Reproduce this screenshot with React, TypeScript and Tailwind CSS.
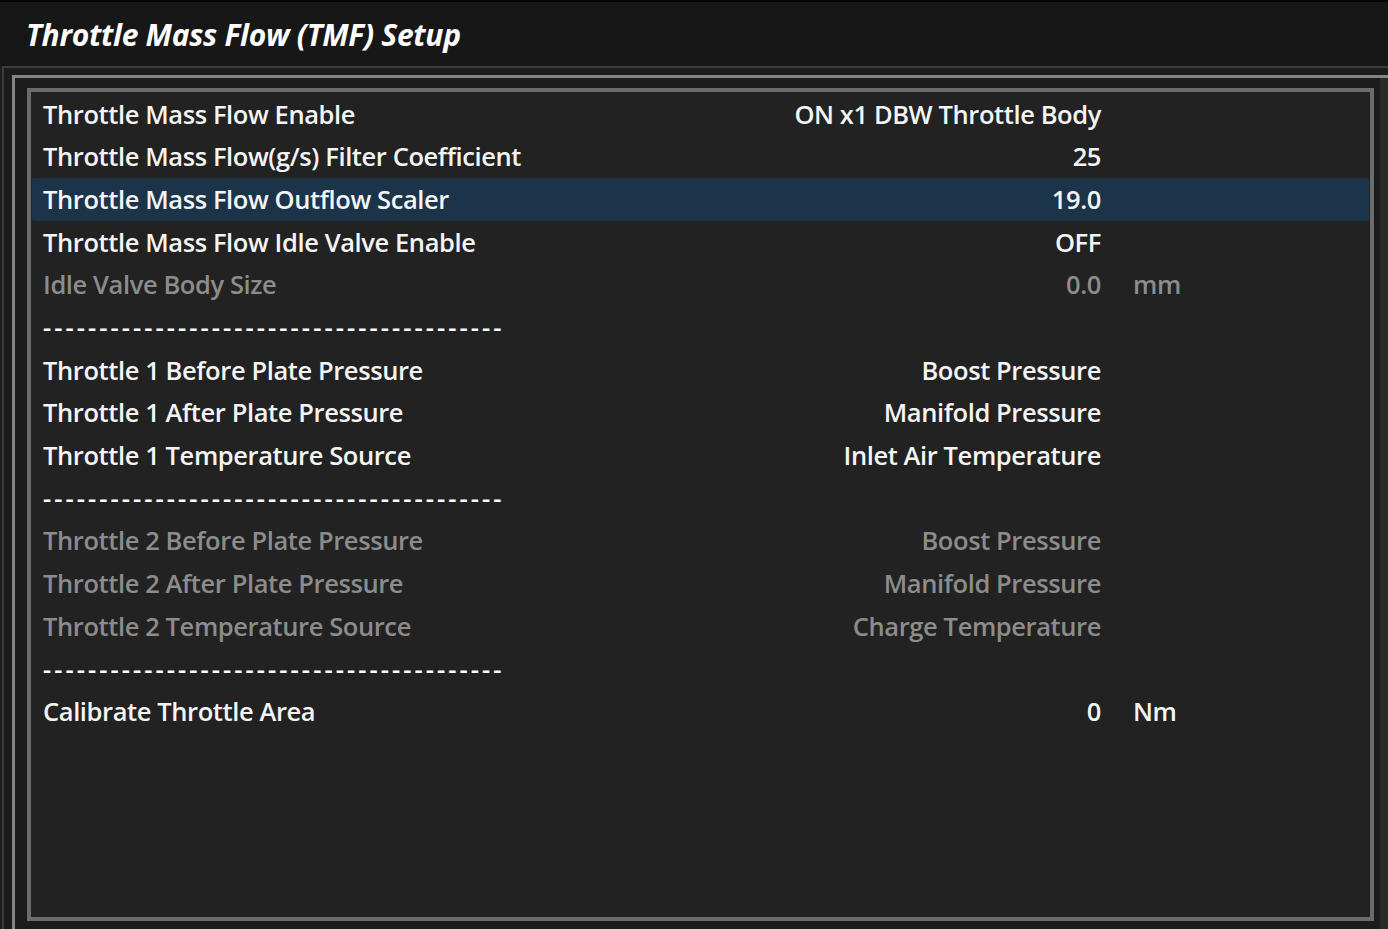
import React from "react";

type Row =
  | { kind: "row"; label: string; value: string; unit?: string; dim?: boolean; selected?: boolean }
  | { kind: "sep" };

const rows: Row[] = [
  { kind: "row", label: "Throttle Mass Flow Enable", value: "ON x1 DBW Throttle Body" },
  { kind: "row", label: "Throttle Mass Flow(g/s) Filter Coefficient", value: "25" },
  { kind: "row", label: "Throttle Mass Flow Outflow Scaler", value: "19.0", selected: true },
  { kind: "row", label: "Throttle Mass Flow Idle Valve Enable", value: "OFF" },
  { kind: "row", label: "Idle Valve Body Size", value: "0.0", unit: "mm", dim: true },
  { kind: "sep" },
  { kind: "row", label: "Throttle 1 Before Plate Pressure", value: "Boost Pressure" },
  { kind: "row", label: "Throttle 1 After Plate Pressure", value: "Manifold Pressure" },
  { kind: "row", label: "Throttle 1 Temperature Source", value: "Inlet Air Temperature" },
  { kind: "sep" },
  { kind: "row", label: "Throttle 2 Before Plate Pressure", value: "Boost Pressure", dim: true },
  { kind: "row", label: "Throttle 2 After Plate Pressure", value: "Manifold Pressure", dim: true },
  { kind: "row", label: "Throttle 2 Temperature Source", value: "Charge Temperature", dim: true },
  { kind: "sep" },
  { kind: "row", label: "Calibrate Throttle Area", value: "0", unit: "Nm" },
];

export default function App() {
  return (
    <div
      className="w-[1388px] h-[929px] overflow-hidden bg-[#1e1e1e] flex flex-col"
      style={{ fontFamily: "'Open Sans', 'Noto Sans', sans-serif" }}
    >
      <div className="h-[66px] shrink-0 border-t-2 border-[#050505] bg-[#171717] flex items-center pl-[26px] pt-[2px]">
        <span className="text-[30px] font-bold italic text-white tracking-[-0.3px] leading-none">
          Throttle Mass Flow (TMF) Setup
        </span>
      </div>
      <div className="flex-1 flex flex-col border-t-2 border-l-2 border-[#3c3c3c] ml-[2px] bg-[#1c1c1c]">
        <div className="flex-1 flex mt-[7px] ml-[8px] border-t-[3px] border-l-[3px] border-[#858585] pt-[10px] pl-[12px]">
          <div className="flex-1 flex flex-col mb-[8px] border-4 border-[#6c6c6c] bg-[#222222] pt-px pl-px pr-[1px]">
            {rows.map((r, i) =>
              r.kind === "sep" ? (
                <div key={i} className="h-[42.7px] flex items-center pl-[11px]">
                  <span className="text-[25.5px] font-semibold text-white tracking-[3.05px] leading-none">
                    {"-".repeat(41)}
                  </span>
                </div>
              ) : (
                <div
                  key={i}
                  className={
                    "h-[42.7px] flex items-center pl-[11px] rounded-[2px] " +
                    (r.selected ? "bg-[#1b3449]" : "")
                  }
                >
                  <span
                    className={
                      "w-[600px] shrink-0 whitespace-nowrap text-[25.5px] font-semibold leading-none tracking-[-0.4px] " +
                      (r.dim ? "text-[#8c8c8c]" : "text-[#f4f4f4]")
                    }
                  >
                    {r.label}
                  </span>
                  <span
                    className={
                      "w-[458px] shrink-0 whitespace-nowrap text-right text-[25.5px] font-semibold leading-none tracking-[-0.4px] " +
                      (r.dim ? "text-[#8c8c8c]" : "text-[#f4f4f4]")
                    }
                  >
                    {r.value}
                  </span>
                  <span
                    className={
                      "ml-[32px] text-[25.5px] font-semibold leading-none tracking-[-0.4px] " +
                      (r.dim ? "text-[#8c8c8c]" : "text-[#f4f4f4]")
                    }
                  >
                    {r.unit ?? ""}
                  </span>
                </div>
              )
            )}
          </div>
          <div className="w-[6px] shrink-0" />
          <div className="w-[8px] shrink-0 bg-[#2a2a2a] mt-[-10px]" />
        </div>
      </div>
    </div>
  );
}
